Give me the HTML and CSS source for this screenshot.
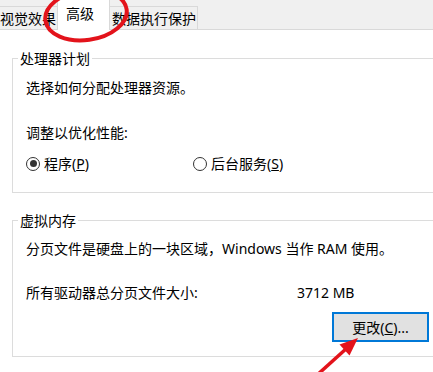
FILE: index.html
```html
<!DOCTYPE html>
<html lang="zh-CN">
<head>
    <meta charset="UTF-8">
    <title>性能选项</title>
    <link rel="stylesheet" href="styles.css">
</head>
<body>
    <div class="tabs">
        <div class="tab first">视觉效果</div>
        <div class="tab active">高级</div>
        <div class="tab last">数据执行保护</div>
    </div>

    <div class="panel">
        <fieldset class="group cpu">
            <legend>处理器计划</legend>
            <div class="line intro">选择如何分配处理器资源。</div>
            <div class="line tune">调整以优化性能:</div>
            <div class="radios">
                <label class="radio"><span class="dot checked"></span><span>程序(<u>P</u>)</span></label>
                <label class="radio"><span class="dot"></span><span>后台服务(<u>S</u>)</span></label>
            </div>
        </fieldset>

        <fieldset class="group memory">
            <legend>虚拟内存</legend>
            <div class="line intro">分页文件是硬盘上的一块区域，Windows 当作 RAM 使用。</div>
            <div class="line size">
                <span class="size-label">所有驱动器总分页文件大小:</span>
                <span>3712 MB</span>
            </div>
            <div class="actions">
                <button class="change">更改(<u>C</u>)...</button>
            </div>
        </fieldset>
    </div>

    <!-- пометки поверх скриншота -->
    <svg class="marks" width="433" height="372" viewBox="0 0 433 372">
        <ellipse cx="86" cy="15" rx="41" ry="25" transform="rotate(-8 86 15)"
                 fill="none" stroke="#e3131b" stroke-width="4"/>
        <line x1="316" y1="376" x2="347" y2="348" stroke="#e3131b" stroke-width="3.5"/>
        <polygon points="358,338 349.5,355.5 339.5,344.5" fill="#e3131b"/>
    </svg>
</body>
</html>
```

FILE: styles.css
```css
body {
    margin: 0;
    width: 433px;
    height: 372px;
    overflow: hidden;
    position: relative;
    background-color: white;
    color: #000;
    font-family: "Noto Sans", "Noto Sans CJK SC", sans-serif;
    font-size: 14px;
    line-height: 17px;
}

.tabs {
    display: flex;
    align-items: flex-end;
    height: 29px;
    background-color: #f0f0f0;
    border-bottom: 1px solid #d9d9d9;
}

.tab {
    height: 22px;
    padding: 0 2px;
    border: 1px solid #d9d9d9;
    border-bottom: none;
    line-height: 24px;
}

.tab.first {
    margin-left: -3px;
}

.tab.last {
    margin-left: -1px;
    padding: 0 1px 0 2px;
}

.tab.active {
    height: 30px;
    margin-left: -2px;
    margin-bottom: -1px;
    padding: 0 15px 0 8px;
    line-height: 28px;
    background-color: white;
    position: relative;
}

.panel {
    padding-left: 12px;
}

.group {
    width: 440px;
    margin: 20px 0 0;
    padding: 0 0 20px 13px;
    border: 1px solid #dcdcdc;
    box-sizing: border-box;
    min-width: 0;
}

.group legend {
    margin-left: -8px;
    padding: 0 2px;
}

.group.memory {
    margin-top: 19px;
    padding-bottom: 14px;
}

.cpu .intro {
    margin-top: 12px;
}

.cpu .tune {
    margin-top: 28px;
}

.radios {
    display: grid;
    grid-template-columns: 167px auto;
    margin-top: 14px;
}

.radio {
    display: flex;
    align-items: center;
    gap: 4px;
}

.dot {
    width: 12px;
    height: 12px;
    border: 1px solid #333;
    border-radius: 50%;
    display: flex;
    align-items: center;
    justify-content: center;
}

.dot.checked::after {
    content: "";
    width: 7px;
    height: 7px;
    border-radius: 50%;
    background-color: #333;
}

.memory .intro {
    margin-top: 11px;
}

.size {
    display: flex;
    margin-top: 27px;
}

.size-label {
    width: 271px;
}

.actions {
    display: flex;
    margin-top: 11px;
    padding-left: 306px;
}

.change {
    width: 97px;
    height: 30px;
    background-color: #e1e1e1;
    border: 2px solid #0078d7;
    font: inherit;
    color: #000;
    padding: 0;
}

.marks {
    position: absolute;
    left: 0;
    top: 0;
    pointer-events: none;
}
```
